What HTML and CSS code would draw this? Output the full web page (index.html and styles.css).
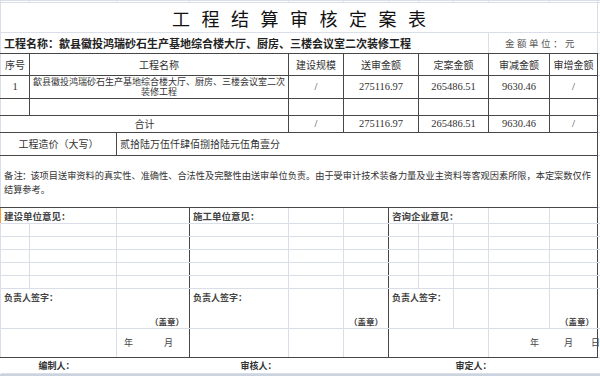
FILE: index.html
```html
<!DOCTYPE html>
<html>
<head>
    <title>工程结算审核定案表</title>
    <link rel="stylesheet" href="styles.css">
</head>
<body>
    <table class="sheet">
        <colgroup>
            <col class="col-a"><col class="col-b"><col class="col-c"><col class="col-d">
            <col class="col-e"><col class="col-f"><col class="col-g"><col class="col-h">
            <col class="col-i"><col class="col-j"><col class="col-k"><col class="col-l">
        </colgroup>

        <tr class="r-top">
            <td></td><td></td><td></td><td></td><td></td><td></td>
            <td></td><td></td><td></td><td></td><td></td><td></td>
        </tr>
        <tr class="r-title">
            <td colspan="11" class="title">工程结算审核定案表</td>
            <td></td>
        </tr>
        <tr class="r-info">
            <td colspan="9" class="info db">工程名称：歙县徽投鸿瑞砂石生产基地综合楼大厅、厨房、三楼会议室二次装修工程</td>
            <td colspan="2" class="unit db">金额单位：元</td>
            <td></td>
        </tr>

        <!-- 定案表 -->
        <tr class="r-head">
            <td class="k edge">序号</td>
            <td colspan="3" class="k">工程名称</td>
            <td class="k">建设规模</td>
            <td colspan="2" class="k">送审金额</td>
            <td colspan="2" class="k">定案金额</td>
            <td class="k">审减金额</td>
            <td class="k">审增金额</td>
            <td></td>
        </tr>
        <tr class="r-item">
            <td class="k edge num">1</td>
            <td colspan="3" class="k name"><div>歙县徽投鸿瑞砂石生产基地综合楼大厅、厨房、三楼会议室二次</div><div>装修工程</div></td>
            <td class="k num">/</td>
            <td colspan="2" class="k num">275116.97</td>
            <td colspan="2" class="k num">265486.51</td>
            <td class="k num">9630.46</td>
            <td class="k num">/</td>
            <td></td>
        </tr>
        <tr class="r-blank">
            <td class="k edge"></td>
            <td colspan="3" class="k"></td>
            <td class="k"></td>
            <td colspan="2" class="k"></td>
            <td colspan="2" class="k"></td>
            <td class="k"></td>
            <td class="k"></td>
            <td></td>
        </tr>
        <tr class="r-sum">
            <td colspan="4" class="k edge">合计</td>
            <td class="k num">/</td>
            <td colspan="2" class="k num">275116.97</td>
            <td colspan="2" class="k num">265486.51</td>
            <td class="k num">9630.46</td>
            <td class="k num">/</td>
            <td></td>
        </tr>
        <tr class="r-cost">
            <td colspan="2" class="k edge">工程造价（大写）</td>
            <td colspan="9" class="k left">贰拾陆万伍仟肆佰捌拾陆元伍角壹分</td>
            <td></td>
        </tr>
        <tr class="r-note">
            <td colspan="11" class="k edge note"><span class="note-head">备&nbsp;注：</span>该项目送审资料的真实性、准确性、合法性及完整性由送审单位负责。由于受审计技术装备力量及业主资料等客观因素所限，本定案数仅作<br>结算参考。</td>
            <td></td>
        </tr>

        <!-- 意见栏 -->
        <tr class="r-label">
            <td colspan="2" class="lbl mark">建设单位意见：</td>
            <td class="dr"></td>
            <td class="lbl">施工单位意见：</td>
            <td></td>
            <td class="dr"></td>
            <td colspan="3" class="lbl">咨询企业意见：</td>
            <td></td>
            <td class="dr"></td>
            <td></td>
        </tr>
        <tr class="r-grid">
            <td></td><td></td><td class="dr"></td><td></td><td></td><td class="dr"></td>
            <td></td><td></td><td></td><td></td><td class="dr"></td><td></td>
        </tr>
        <tr class="r-grid">
            <td></td><td></td><td class="dr"></td><td></td><td></td><td class="dr"></td>
            <td></td><td></td><td></td><td></td><td class="dr"></td><td></td>
        </tr>
        <tr class="r-grid">
            <td></td><td></td><td class="dr"></td><td></td><td></td><td class="dr"></td>
            <td></td><td></td><td></td><td></td><td class="dr"></td><td></td>
        </tr>
        <tr class="r-grid">
            <td></td><td></td><td class="dr"></td><td></td><td></td><td class="dr"></td>
            <td></td><td></td><td></td><td></td><td class="dr"></td><td></td>
        </tr>
        <tr class="r-grid">
            <td></td><td></td><td class="dr"></td><td></td><td></td><td class="dr"></td>
            <td></td><td></td><td></td><td></td><td class="dr"></td><td></td>
        </tr>
        <tr class="r-sign">
            <td colspan="2" class="lbl">负责人签字：</td>
            <td class="dr seal">（盖章）</td>
            <td class="lbl">负责人签字：</td>
            <td></td>
            <td class="dr seal">（盖章）</td>
            <td colspan="2" class="lbl">负责人签字：</td>
            <td></td>
            <td></td>
            <td class="dr seal seal-end">（盖章）</td>
            <td></td>
        </tr>
        <tr class="r-date">
            <td colspan="2" class="db"></td>
            <td class="dr db date">年月</td>
            <td class="db"></td>
            <td class="db"></td>
            <td class="dr db"></td>
            <td colspan="3" class="db"></td>
            <td colspan="2" class="dr db date-full"><span class="d-y">年</span><span class="d-m">月</span><span>日</span></td>
            <td></td>
        </tr>
        <tr class="r-foot">
            <td colspan="3" class="foot foot-a">编制人：</td>
            <td colspan="3" class="foot foot-b">审核人：</td>
            <td colspan="5" class="foot foot-c">审定人：</td>
            <td class="foot"></td>
        </tr>
    </table>
    <div class="tabs"></div>
</body>
</html>
```

FILE: styles.css
```css
body {
    margin: 0;
    font-family: "Noto Sans CJK SC", sans-serif;
    color: #333;
    background: #fff;
    overflow: hidden;
}

.sheet {
    width: 600px;
    table-layout: fixed;
    border-collapse: collapse;
}

.col-a { width: 29px; }
.col-b { width: 87px; }
.col-c { width: 73px; }
.col-d { width: 99px; }
.col-e { width: 55px; }
.col-f { width: 45px; }
.col-g { width: 30px; }
.col-h { width: 35px; }
.col-i { width: 35px; }
.col-j { width: 61px; }
.col-k { width: 48px; }
.col-l { width: 3px; }

.sheet td {
    border: 1px solid #d9dee8;
    padding: 0;
    font-size: 10px;
    line-height: 12px;
    white-space: nowrap;
    text-align: center;
    vertical-align: middle;
}

/* row heights */
.r-top { height: 2px; }
.r-title { height: 30px; }
.r-info { height: 21px; }
.r-head { height: 22px; }
.r-item { height: 23px; }
.r-blank { height: 17px; }
.r-sum { height: 17px; }
.r-cost { height: 23px; }
.r-note { height: 52px; }
.r-label { height: 16px; }
.r-grid { height: 13px; }
.r-sign { height: 40px; }
.r-date { height: 29px; }
.r-foot { height: 16px; }

/* dark borders */
.sheet .k { border-color: #474747; }
.sheet .edge { border-left-color: #d9dee8; }
.sheet .dr { border-right-color: #474747; }
.sheet .db { border-bottom-color: #474747; }

.sheet .title {
    font-size: 18px;
    line-height: 22px;
    letter-spacing: 11.5px;
    padding-left: 11.5px;
    color: #111;
}

.sheet .info {
    text-align: left;
    padding-left: 3px;
    font-size: 11px;
    font-weight: bold;
    color: #222;
}

.sheet .unit {
    font-size: 9.5px;
    letter-spacing: 2.5px;
    color: #555;
    padding-right: 4px;
}

.sheet .num {
    font-family: "Liberation Serif", serif;
    font-size: 10.5px;
    color: #333;
}

.sheet .name {
    font-size: 9px;
    line-height: 10.5px;
}

.sheet .left {
    text-align: left;
    padding-left: 3px;
}

.sheet .note {
    text-align: left;
    padding-left: 3px;
    font-size: 9.2px;
    line-height: 14px;
}

.note-head {
    letter-spacing: -0.8px;
}

.sheet .lbl {
    text-align: left;
    vertical-align: top;
    padding: 2px 0 0 3px;
    font-size: 9.5px;
    font-weight: bold;
    color: #444;
}

.sheet .r-sign .lbl {
    padding-top: 3px;
    font-size: 9px;
}

.sheet .mark { border-left-color: #f2a33a; }

.sheet .seal {
    text-align: right;
    vertical-align: bottom;
    padding: 0 5px 1px 0;
    font-size: 8.5px;
    font-weight: bold;
    color: #444;
}

.sheet .seal-end { padding-right: 3px; }

.sheet .date {
    text-align: left;
    padding-left: 7px;
    font-size: 9px;
    letter-spacing: 31px;
    color: #444;
}

.sheet .date-full {
    text-align: left;
    padding-left: 41px;
    font-size: 9px;
    color: #444;
}

.d-y { margin-right: 25px; }
.d-m { margin-right: 18px; }

.sheet .foot {
    border-left-style: none;
    border-right-style: none;
    text-align: left;
    font-size: 9px;
    font-weight: bold;
    color: #333;
}

.sheet .foot-a { padding-left: 38px; }
.sheet .foot-b { padding-left: 51px; }
.sheet .foot-c { padding-left: 67px; }

.tabs {
    height: 3px;
    background: #cbd3df;
}
```
